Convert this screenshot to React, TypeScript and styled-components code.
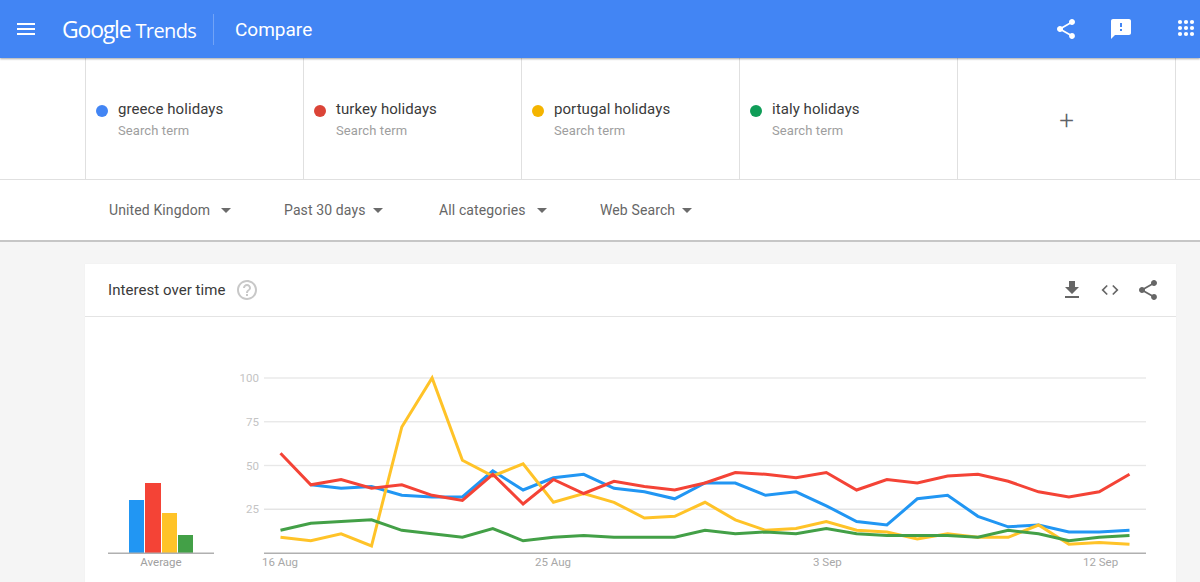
import React from "react";
import styled, { createGlobalStyle } from "styled-components";

const Global = createGlobalStyle`
  html, body { margin: 0; padding: 0; height: 582px; overflow: hidden; background: #f5f5f5; }
  body { font-family: Roboto, "Liberation Sans", sans-serif; }
`;

const Page = styled.div`width: 1200px; height: 582px; overflow: hidden; display: flex; flex-direction: column;`;

const Header = styled.header`
  height: 58px; flex: none; background: #4285f4; color: #fff; display: flex; align-items: center;
  box-shadow: 0 1px 2px rgba(0,0,0,.35); position: relative; z-index: 2;
`;
const MenuButton = styled.svg`width: 24px; height: 24px; margin-left: 14px; fill: #fff; flex: none;`;
const Logo = styled.div`
  margin-left: 24px; width: 151px; flex: none; display: flex; align-items: baseline; gap: 5px;
  font-family: "Open Sans", Roboto, sans-serif; color: #fff; white-space: nowrap;
`;
const LogoGoogle = styled.span`font-size: 23px; letter-spacing: -1.2px; font-weight: 400;`;
const LogoTrends = styled.span`font-size: 20px; letter-spacing: -.6px; font-weight: 400;`;
const HeaderDivider = styled.div`width: 1px; height: 31px; background: rgba(255,255,255,.25); flex: none;`;
const PageTitle = styled.div`margin-left: 21px; font-size: 19px; font-weight: 400; color: #fff;`;
const HeaderActions = styled.div`margin-left: auto; display: flex; align-items: center; margin-right: 2px;`;
const HeaderIcon = styled.svg<{ $gap?: number }>`
  width: 24px; height: 24px; fill: #fff; display: block; margin-right: ${p => p.$gap ?? 0}px;
`;

const Terms = styled.section`
  height: 121px; flex: none; background: #fff; display: flex; padding-left: 85px;
  border-bottom: 1px solid #e0e0e0;
`;
const TermCell = styled.div`
  width: 218px; box-sizing: border-box; border-left: 1px solid #e0e0e0; display: flex; align-items: flex-start;
  padding: 42px 0 0 10px;
`;
const AddCell = styled(TermCell)`
  padding: 2px 0 0; justify-content: center; align-items: center; border-right: 1px solid #e0e0e0; width: 219px;
  color: #5f6368; font-size: 26px; font-weight: 300;
`;
const Dot = styled.span<{ $c: string }>`
  width: 12px; height: 12px; border-radius: 50%; background: ${p => p.$c}; flex: none; margin: 5px 10px 0 0;
`;
const TermText = styled.div`display: flex; flex-direction: column;`;
const TermName = styled.div`font-size: 15px; line-height: 18px; color: #3a3a3a; letter-spacing: .07px;`;
const TermSub = styled.div`font-size: 13px; line-height: 16px; margin-top: 5px; color: #9e9e9e; letter-spacing: .1px;`;

const Filters = styled.section`
  height: 60px; flex: none; background: #fff; display: flex; align-items: center; padding-left: 109px;
  border-bottom: 2px solid #c6c6c6;
`;
const Filter = styled.div<{ $w: number; $gap: number }>`
  width: ${p => p.$w}px; display: flex; align-items: center; gap: ${p => p.$gap}px; font-size: 14px; color: #666;
  white-space: nowrap; letter-spacing: .12px;
`;
const Caret = styled.span`
  width: 0; height: 0; border-left: 5.5px solid transparent; border-right: 5.5px solid transparent; border-top: 5.5px solid #6b6b6b; margin-top: 1px;
`;

const Main = styled.main`flex: 1; padding: 22px 24px 0 85px; min-height: 0;`;
const Card = styled.section`background: #fff; height: 318px; box-shadow: 0 0 1px rgba(0,0,0,.05);`;
const CardHeader = styled.div`
  height: 52px; display: flex; align-items: center; padding: 0 16px 0 23px; border-bottom: 1px solid #e4e4e4;
`;
const CardTitle = styled.h2`margin: 0; font-size: 15px; font-weight: 400; color: #3a3a3a; letter-spacing: .05px; line-height: 52px;`;
const HelpIcon = styled.svg`width: 24px; height: 24px; fill: #c8c8c8; margin-left: 10px;`;
const CardActions = styled.div`margin-left: auto; display: flex; align-items: center; gap: 14px;`;
const CardIcon = styled.svg`width: 24px; height: 24px; fill: #666; display: block;`;
const ChartRow = styled.div`display: flex; height: 265px;`;
const ChartSvg = styled.svg`display: block; flex: none;`;

const BLUE = "#2196f3", RED = "#f44336", YELLOW = "#ffc328", GREEN = "#43a047";
const series: [string, (number | null)[]][] = [
  [BLUE, [null,39,37,38,33,32,32,47,36,43,45,37,35,31,40,40,33,35,27,18,16,31,33,21,15,16,12,12,13]],
  [YELLOW, [9,7,11,4,72,100,53,44,51,29,34,29,20,21,29,19,13,14,18,13,12,8,11,9,9,16,5,6,5]],
  [GREEN, [13,17,18,19,13,11,9,14,7,9,10,9,9,9,13,11,12,11,14,11,10,10,10,9,13,11,7,9,10]],
  [RED, [57,39,42,37,39,33,30,45,28,42,34,41,38,36,40,46,45,43,46,36,42,40,44,45,41,35,32,35,45]],
];
// chart coordinates are page coordinates minus the svg origin (x 235, y 317)
const OX = 235, OY = 317;
const px = (i: number) => 280.5 + i * (849 / 28) - OX;
const py = (v: number) => 553 - v * 1.75 - OY;
const linePoints = (d: (number | null)[]) =>
  d.map((v, i) => (v === null ? null : `${px(i).toFixed(1)},${py(v).toFixed(1)}`)).filter(Boolean).join(" ");

const bars = [
  { x: 44, w: 15, top: 183, c: BLUE },
  { x: 60, w: 16, top: 166, c: RED },
  { x: 77, w: 15, top: 196, c: YELLOW },
  { x: 93, w: 15, top: 218, c: GREEN },
];

const share = "M18 16.08c-.76 0-1.44.3-1.96.77L8.91 12.7c.05-.23.09-.46.09-.7s-.04-.47-.09-.7l7.05-4.11c.54.5 1.25.81 2.04.81 1.66 0 3-1.34 3-3s-1.34-3-3-3-3 1.34-3 3c0 .24.04.47.09.7L8.04 9.81C7.5 9.31 6.79 9 6 9c-1.66 0-3 1.34-3 3s1.34 3 3 3c.79 0 1.5-.31 2.04-.81l7.12 4.16c-.05.21-.08.43-.08.65 0 1.61 1.31 2.92 2.92 2.92 1.61 0 2.92-1.31 2.92-2.92s-1.31-2.92-2.92-2.92z";

const terms = [
  { name: "greece holidays", c: "#4285f4" },
  { name: "turkey holidays", c: "#db4437" },
  { name: "portugal holidays", c: "#f4b400" },
  { name: "italy holidays", c: "#0f9d58" },
];
const filters = [
  { label: "United Kingdom", w: 175, gap: 11 },
  { label: "Past 30 days", w: 155, gap: 7 },
  { label: "All categories", w: 161, gap: 11 },
  { label: "Web Search", w: 100, gap: 7 },
];

export default function App() {
  return (
    <Page>
      <Global />
      <Header>
        <MenuButton viewBox="0 0 24 24"><path d="M3 18h18v-2H3v2zm0-5h18v-2H3v2zm0-7v2h18V6H3z" /></MenuButton>
        <Logo><LogoGoogle>Google</LogoGoogle><LogoTrends>Trends</LogoTrends></Logo>
        <HeaderDivider />
        <PageTitle>Compare</PageTitle>
        <HeaderActions>
          <HeaderIcon $gap={31} viewBox="0 0 24 24"><path d={share} /></HeaderIcon>
          <HeaderIcon $gap={41} viewBox="0 0 24 24"><path d="M20 2H4c-1.1 0-1.99.9-1.99 2L2 22l4-4h14c1.1 0 2-.9 2-2V4c0-1.1-.9-2-2-2zm-7 12h-2v-2h2v2zm0-4h-2V6h2v4z" /></HeaderIcon>
          <HeaderIcon viewBox="0 0 24 24">
            {[4, 10, 16].flatMap(y => [4, 10, 16].map(x => <circle key={`${x}-${y}`} cx={x + 2} cy={y + 1} r="2.1" />))}
          </HeaderIcon>
        </HeaderActions>
      </Header>

      <Terms>
        {terms.map(t => (
          <TermCell key={t.name}>
            <Dot $c={t.c} />
            <TermText>
              <TermName>{t.name}</TermName>
              <TermSub>Search term</TermSub>
            </TermText>
          </TermCell>
        ))}
        <AddCell>+</AddCell>
      </Terms>

      <Filters>
        {filters.map(f => (
          <Filter key={f.label} $w={f.w} $gap={f.gap}>{f.label}<Caret /></Filter>
        ))}
      </Filters>

      <Main>
        <Card>
          <CardHeader>
            <CardTitle>Interest over time</CardTitle>
            <HelpIcon viewBox="0 0 24 24"><path d="M11 18h2v-2h-2v2zm1-16C6.48 2 2 6.48 2 12s4.48 10 10 10 10-4.48 10-10S17.52 2 12 2zm0 18c-4.41 0-8-3.59-8-8s3.59-8 8-8 8 3.59 8 8-3.59 8-8 8zm0-14c-2.21 0-4 1.79-4 4h2c0-1.1.9-2 2-2s2 .9 2 2c0 2-3 1.75-3 5h2c0-2.25 3-2.5 3-5 0-2.21-1.79-4-4-4z" /></HelpIcon>
            <CardActions>
              <CardIcon viewBox="0 0 24 24"><path d="M19 9h-4V3H9v6H5l7 7 7-7zM5 18v2h14v-2H5z" /></CardIcon>
              <CardIcon viewBox="0 0 24 24"><path d="M9.4 16.6L4.8 12l4.6-4.6L8 6l-6 6 6 6 1.4-1.4zm5.2 0l4.6-4.6-4.6-4.6L16 6l6 6-6 6-1.4-1.4z" transform="translate(1.8 1.8) scale(.85)" /></CardIcon>
              <CardIcon viewBox="0 0 24 24"><path d={share} /></CardIcon>
            </CardActions>
          </CardHeader>
          <ChartRow>
            <ChartSvg width="150" height="265" viewBox="0 0 150 265" fontFamily="Roboto, sans-serif">
              {bars.map(b => <rect key={b.c} x={b.x} y={b.top} width={b.w} height={236 - b.top} fill={b.c} />)}
              <rect x="23" y="235.5" width="106" height="1.5" fill="#b0b0b0" />
              <text x="76" y="249" textAnchor="middle" fontSize="11.5" fill="#a0a0a0">Average</text>
            </ChartSvg>
            <ChartSvg width="941" height="265" viewBox="0 0 941 265" fontFamily="Roboto, sans-serif">
              {[100, 75, 50, 25].map(v => (
                <g key={v}>
                  <rect x="29" y={py(v) - 0.7} width="882" height="1.4" fill={v === 25 ? "#e3e3e3" : "#e8e8e8"} />
                  <text x="24" y={py(v) + 4} textAnchor="end" fontSize="11.5" fill="#c4c4c4">{v}</text>
                </g>
              ))}
              <rect x="29" y="235.5" width="882" height="1.5" fill="#b0b0b0" />
              {[["16 Aug", 27], ["25 Aug", 300], ["3 Sep", 578], ["12 Sep", 848]].map(([t, x]) => (
                <text key={t} x={x} y="249" fontSize="11.5" fill="#a8a8a8">{t}</text>
              ))}
              {series.map(([c, d]) => (
                <polyline key={c} points={linePoints(d)} fill="none" stroke={c} strokeWidth="3" strokeLinejoin="miter" />
              ))}
            </ChartSvg>
          </ChartRow>
        </Card>
      </Main>
    </Page>
  );
}
